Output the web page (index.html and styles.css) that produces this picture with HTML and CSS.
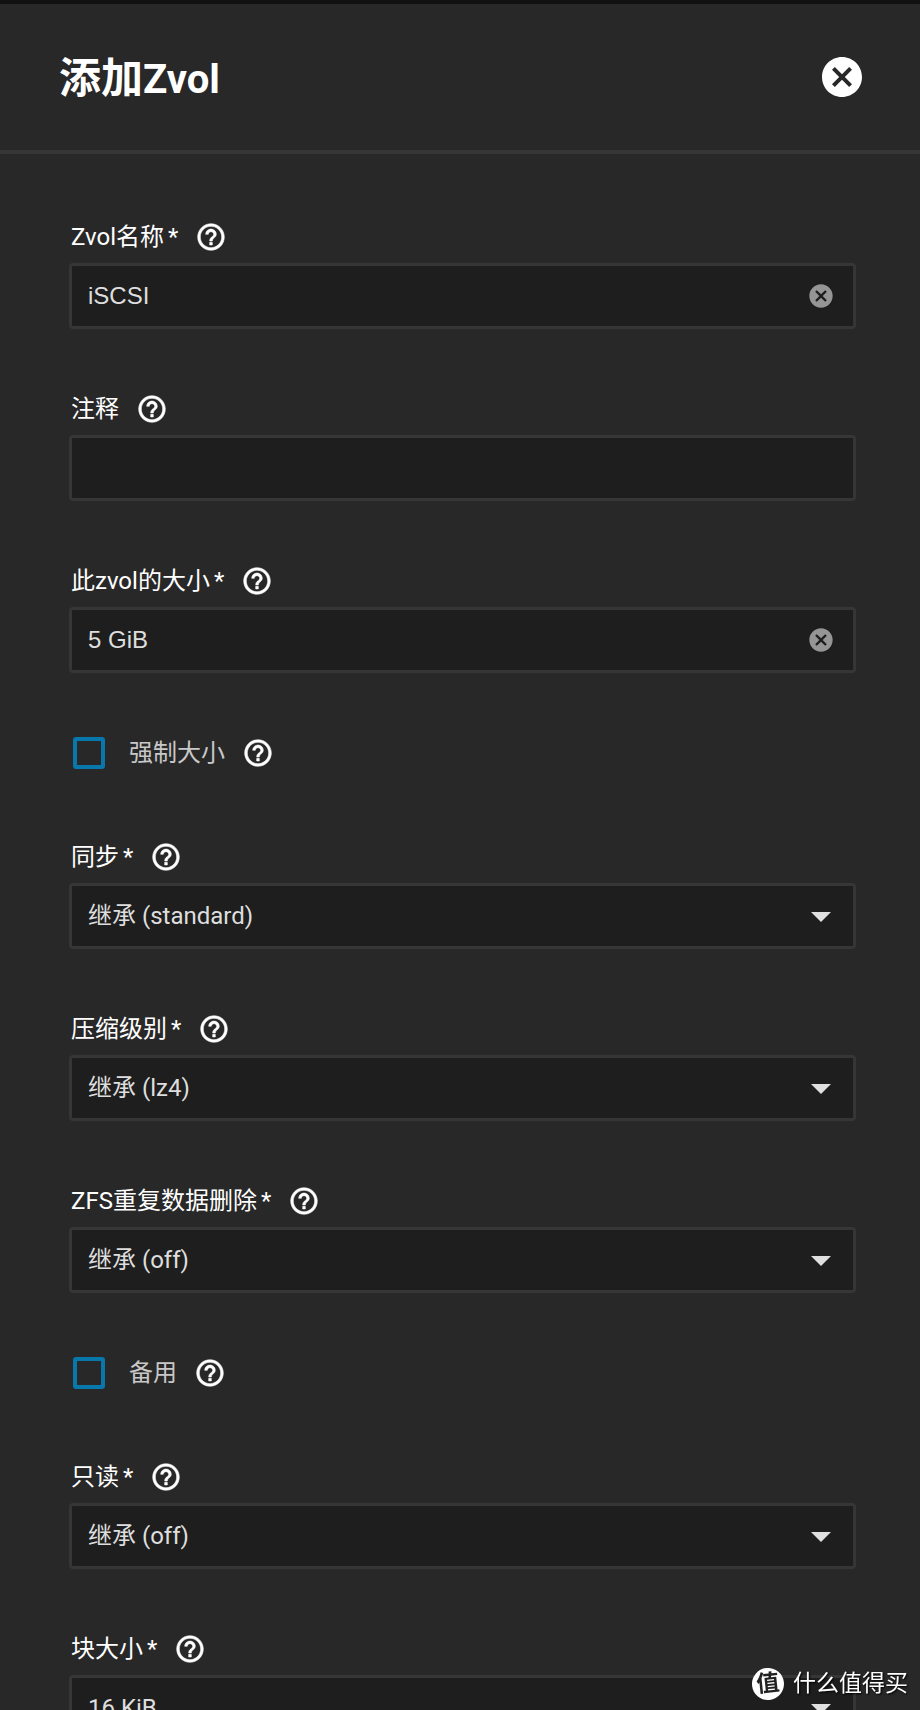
FILE: index.html
```html
<!DOCTYPE html>
<html lang="zh-CN">
<head>
<meta charset="utf-8">
<meta name="viewport" content="width=device-width, initial-scale=1">
<title>添加Zvol</title>
<link rel="stylesheet" href="styles.css">
</head>
<body>
<svg class="defs" aria-hidden="true">
  <symbol id="help" viewBox="0 0 24 24"><path d="M11 18h2v-2h-2v2zm1-16C6.48 2 2 6.48 2 12s4.480 10 10 10 10-4.480 10-10S17.520 2 12 2zm0 18c-4.410 0-8-3.590-8-8s3.590-8 8-8 8 3.590 8 8-3.590 8-8 8zm0-14c-2.210 0-4 1.790-4 4h2c0-1.100.9-2 2-2s2 .9 2 2c0 2-3 1.750-3 5h2c0-2.250 3-2.500 3-5 0-2.210-1.790-4-4-4z"/></symbol>
  <symbol id="cancel" viewBox="0 0 24 24"><path d="M12 2C6.470 2 2 6.470 2 12s4.470 10 10 10 10-4.470 10-10S17.530 2 12 2zm5 13.590L15.590 17 12 13.410 8.410 17 7 15.590 10.590 12 7 8.410 8.410 7 12 10.590 15.590 7 17 8.410 13.410 12 17 15.590z"/></symbol>
</svg>
<div class="panel">
  <header class="panel-header">
    <h1 class="title">添加<span class="title-latin">Zvol</span></h1>
    <button class="icon-button close" type="button" aria-label="关闭"><svg class="icon"><use href="#cancel"/></svg></button>
  </header>
  <form class="form">
    <div class="field">
      <div class="field-head"><label for="name">Zvol名称<span class="required">*</span></label><button class="icon-button help" type="button" aria-label="帮助"><svg class="icon"><use href="#help"/></svg></button></div>
      <div class="box"><input class="control text" id="name" type="text" value="iSCSI"><button class="icon-button clear" type="button" aria-label="清除"><svg class="icon"><use href="#cancel"/></svg></button></div>
    </div>
    <div class="field">
      <div class="field-head"><label for="comments">注释</label><button class="icon-button help" type="button" aria-label="帮助"><svg class="icon"><use href="#help"/></svg></button></div>
      <div class="box"><input class="control text" id="comments" type="text"></div>
    </div>
    <div class="field">
      <div class="field-head"><label for="size">此zvol的大小<span class="required">*</span></label><button class="icon-button help" type="button" aria-label="帮助"><svg class="icon"><use href="#help"/></svg></button></div>
      <div class="box"><input class="control text" id="size" type="text" value="5 GiB"><button class="icon-button clear" type="button" aria-label="清除"><svg class="icon"><use href="#cancel"/></svg></button></div>
    </div>
    <div class="check-field">
      <input class="checkbox" id="force" type="checkbox"><label class="check-label" for="force">强制大小</label><button class="icon-button help" type="button" aria-label="帮助"><svg class="icon"><use href="#help"/></svg></button>
    </div>
    <div class="field">
      <div class="field-head"><label for="sync">同步<span class="required">*</span></label><button class="icon-button help" type="button" aria-label="帮助"><svg class="icon"><use href="#help"/></svg></button></div>
      <div class="box select-box"><select class="control" id="sync"><option>继承 (standard)</option></select></div>
    </div>
    <div class="field">
      <div class="field-head"><label for="compression">压缩级别<span class="required">*</span></label><button class="icon-button help" type="button" aria-label="帮助"><svg class="icon"><use href="#help"/></svg></button></div>
      <div class="box select-box"><select class="control" id="compression"><option>继承 (lz4)</option></select></div>
    </div>
    <div class="field">
      <div class="field-head"><label for="dedup">ZFS重复数据删除<span class="required">*</span></label><button class="icon-button help" type="button" aria-label="帮助"><svg class="icon"><use href="#help"/></svg></button></div>
      <div class="box select-box"><select class="control" id="dedup"><option>继承 (off)</option></select></div>
    </div>
    <div class="check-field">
      <input class="checkbox" id="sparse" type="checkbox"><label class="check-label" for="sparse">备用</label><button class="icon-button help" type="button" aria-label="帮助"><svg class="icon"><use href="#help"/></svg></button>
    </div>
    <div class="field">
      <div class="field-head"><label for="readonly">只读<span class="required">*</span></label><button class="icon-button help" type="button" aria-label="帮助"><svg class="icon"><use href="#help"/></svg></button></div>
      <div class="box select-box"><select class="control" id="readonly"><option>继承 (off)</option></select></div>
    </div>
    <div class="field">
      <div class="field-head"><label for="block">块大小<span class="required">*</span></label><button class="icon-button help" type="button" aria-label="帮助"><svg class="icon"><use href="#help"/></svg></button></div>
      <div class="box select-box"><select class="control" id="block"><option>16 KiB</option></select></div>
    </div>
  </form>
</div>
<div class="watermark"><span class="watermark-badge">值</span><span>什么值得买</span></div>
</body>
</html>
```

FILE: styles.css
```css
* {
  box-sizing: border-box;
}

body {
  margin: 0;
  background: #282828;
  color: #fff;
  font: 24px/36px Roboto, "Noto Sans CJK SC", sans-serif;
}

.defs {
  display: none;
}

.panel {
  display: flex;
  flex-direction: column;
  height: 100vh;
  border-top: 4px solid #111;
}

.panel-header {
  display: flex;
  flex: none;
  align-items: center;
  justify-content: space-between;
  padding: 49px 54px 49px 59px;
  border-bottom: 4px solid #363636;
}

.title {
  margin: 0;
  padding-top: 5px;
  font-size: 42px;
  line-height: 40px;
  font-weight: 700;
}

.title-latin {
  font-size: 40px;
}

.icon-button {
  display: block;
  flex: none;
  padding: 0;
  border: 0;
  background: none;
  color: #fff;
}

.icon {
  display: block;
  width: 100%;
  height: 100%;
  overflow: visible;
  fill: currentColor;
}

.close {
  width: 48px;
  height: 48px;
}

.help {
  width: 32px;
  height: 32px;
  stroke: currentColor;
  stroke-width: 0.4;
}

.clear {
  width: 28px;
  height: 28px;
  margin-right: 18px;
  color: #959595;
}

.form {
  display: flex;
  flex: 1;
  flex-direction: column;
  gap: 62px;
  min-height: 0;
  overflow-y: auto;
  scrollbar-width: none;
  padding: 65px 64px 65px 69px;
}

.field {
  display: grid;
  flex: none;
  gap: 8px;
}

.field-head {
  display: flex;
  align-items: center;
  gap: 17px;
  height: 36px;
  padding-left: 2px;
}

.required {
  margin-left: 4px;
}

.box {
  position: relative;
  display: flex;
  align-items: center;
  height: 66px;
  border: 3px solid #363636;
  border-radius: 4px;
  background: #1e1e1e;
}

.control {
  flex: 1;
  min-width: 0;
  height: 60px;
  margin: 0;
  padding: 0 16px;
  border: 0;
  outline: 0;
  appearance: none;
  background: none;
  color: #dedede;
  font: inherit;
}

.text {
  font-family: "Liberation Sans", "Noto Sans CJK SC", sans-serif;
}

.select-box::after {
  position: absolute;
  top: 26px;
  right: 22px;
  border: 10px solid transparent;
  border-top-color: #e0e0e0;
  border-bottom: 0;
  content: "";
  pointer-events: none;
}

.check-field {
  display: flex;
  flex: none;
  align-items: center;
  height: 36px;
  margin-bottom: 6px;
  padding-left: 4px;
}

.checkbox {
  width: 32px;
  height: 32px;
  margin: 0 24px 0 0;
  border: 4px solid #0877ab;
  border-radius: 3px;
  appearance: none;
}

.check-label {
  margin-right: 17px;
  color: #c8c8c8;
}

.watermark {
  position: fixed;
  right: 12px;
  bottom: 8px;
  display: flex;
  align-items: center;
  gap: 9px;
  font-size: 23px;
  text-shadow: 1px 1px 2px #000;
}

.watermark-badge {
  width: 32px;
  height: 32px;
  border-radius: 50%;
  background: #fff;
  color: #222;
  font-weight: 700;
  line-height: 32px;
  text-align: center;
  text-shadow: none;
  transform: rotate(-6deg);
}
```
